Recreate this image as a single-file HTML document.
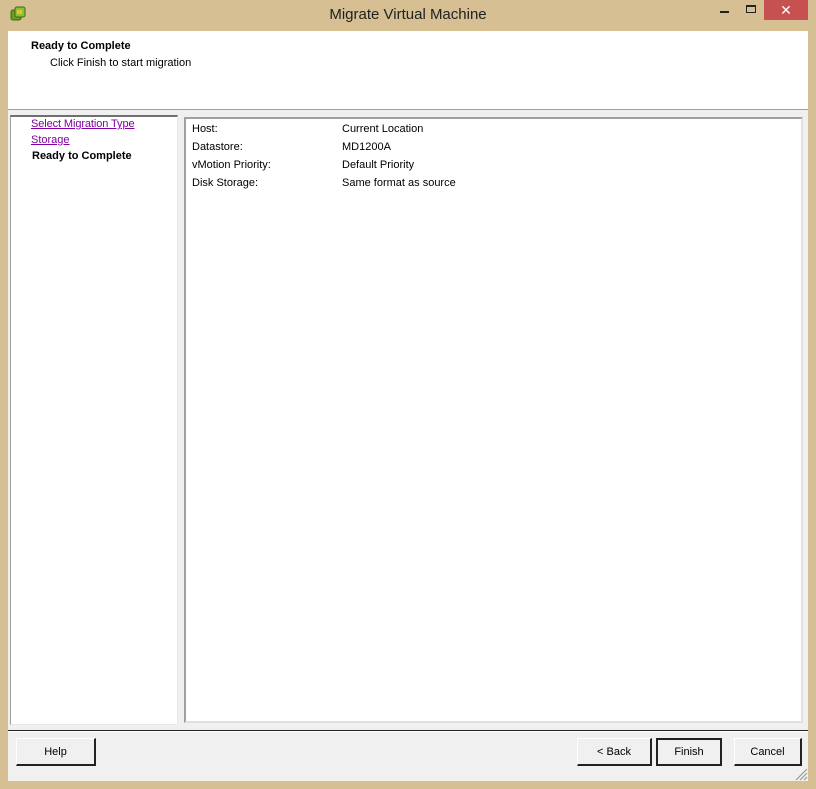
<!DOCTYPE html>
<html><head><style>
*{margin:0;padding:0;box-sizing:border-box}
body{width:816px;height:789px;background:#d5bf93;position:relative;overflow:hidden;font-family:"Liberation Sans",sans-serif;font-size:11px;color:#000}
.abs{position:absolute}
.title{left:0;right:0;top:6px;text-align:center;font-size:15px;color:#222}
.client{left:8px;top:31px;width:800px;height:750px;background:#f0f0f0}
.hdr{left:8px;top:31px;width:800px;height:79px;background:#fff;border-bottom:1px solid #a0a0a0}
.btn{position:absolute;top:738px;height:28px;background:#f0f0f0;border-top:1px solid #fff;border-left:1px solid #fff;border-right:2px solid #222;border-bottom:2px solid #222;text-align:center;line-height:26px;font-size:11px}
a{color:#8000a0;text-decoration:underline}
.row{position:absolute;left:192px}
.val{position:absolute;left:342px}
</style></head><body>
<div class="abs" style="left:10px;top:6px;width:16px;height:16px">
<svg width="16" height="16"><rect x="1" y="4" width="10" height="10" rx="2" fill="#6a9a1e" stroke="#3d6a10"/><rect x="5" y="1" width="10" height="10" rx="2" fill="#8cc23a" stroke="#3d6a10"/><rect x="7" y="4" width="5" height="4" fill="#f0c020"/></svg></div>
<div class="abs title">Migrate Virtual Machine</div>
<div class="abs" style="left:720px;top:11px;width:9px;height:2px;background:#222"></div>
<div class="abs" style="left:746px;top:5px;width:10px;height:8px;border:1px solid #222;border-top-width:2px"></div>
<div class="abs" style="left:764px;top:0;width:44px;height:20px;background:#c75050;color:#fff;text-align:center;font-size:14px;line-height:20px">✕</div>
<div class="abs client"></div>
<div class="abs hdr"></div>
<div class="abs" style="left:31px;top:40px;font-weight:bold">Ready to Complete</div>
<div class="abs" style="left:50px;top:57px">Click Finish to start migration</div>
<div class="abs" style="left:10px;top:115px;width:168px;height:610px;background:#fff;border:1px solid #a0a0a0;border-right-color:#e8e8e8;border-bottom-color:#e8e8e8;border-top:2px solid #707070"></div>
<div class="abs" style="left:31px;top:118px;letter-spacing:-0.1px"><a>Select Migration Type</a></div>
<div class="abs" style="left:31px;top:134px"><a>Storage</a></div>
<div class="abs" style="left:32px;top:150px;font-weight:bold">Ready to Complete</div>
<div class="abs" style="left:184px;top:117px;width:619px;height:606px;background:#fff;border:2px solid #a0a0a0;border-right-color:#e0e0e0;border-bottom-color:#e0e0e0"></div>
<div class="row" style="top:123px">Host:</div><div class="val" style="top:123px">Current Location</div>
<div class="row" style="top:141px">Datastore:</div><div class="val" style="top:141px">MD1200A</div>
<div class="row" style="top:159px">vMotion Priority:</div><div class="val" style="top:159px">Default Priority</div>
<div class="row" style="top:177px">Disk Storage:</div><div class="val" style="top:177px">Same format as source</div>
<div class="abs" style="left:8px;top:730px;width:800px;height:1px;background:#222"></div>
<div class="abs" style="left:8px;top:731px;width:800px;height:1px;background:#fff"></div>
<div class="btn" style="left:16px;width:80px">Help</div>
<div class="btn" style="left:577px;width:75px">&lt; Back</div>
<div class="btn" style="left:656px;width:66px;border:2px solid #222;line-height:24px">Finish</div>
<div class="btn" style="left:734px;width:68px">Cancel</div>
<svg class="abs" style="left:794px;top:767px" width="14" height="14"><path d="M13 2L2 13M13 6L6 13M13 10L10 13" stroke="#999" stroke-width="1.2"/></svg>
</body></html>
